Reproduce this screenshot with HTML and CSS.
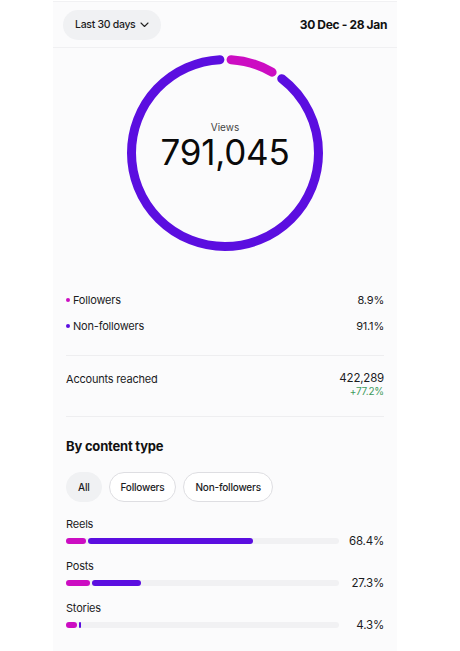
FILE: index.html
```html
<!DOCTYPE html>
<html lang="en">
<head>
<meta charset="utf-8">
<title>Views</title>
<link rel="stylesheet" href="styles.css">
</head>
<body>
<div class="panel">
  <header class="topbar">
    <button class="range-pill">Last 30 days
      <svg class="chev" width="9" height="6" viewBox="0 0 9 6"><path d="M1 1l3.5 3.5L8 1" fill="none" stroke="#222" stroke-width="1.1" stroke-linecap="round" stroke-linejoin="round"/></svg>
    </button>
    <div class="date-range">30 Dec - 28 Jan</div>
  </header>

  <section class="ring-wrap">
    <div class="ring">
      <svg class="ring-svg" width="200" height="200" viewBox="0 0 200 200">
        <g transform="rotate(-90 100 100)">
          <circle cx="100" cy="100" r="93.5" fill="none" stroke="#cc0dc2" stroke-width="9" stroke-linecap="round" stroke-dasharray="43.1 600" stroke-dashoffset="-6.2"/>
          <circle cx="100" cy="100" r="93.5" fill="none" stroke="#5b0ee0" stroke-width="9" stroke-linecap="round" stroke-dasharray="520.4 600" stroke-dashoffset="-60.9"/>
        </g>
      </svg>
      <div class="ring-center">
        <div class="ring-label">Views</div>
        <div class="ring-value">791,045</div>
      </div>
    </div>
  </section>

  <section class="content">
    <div class="legend">
      <div class="legend-row"><span class="dot dot-mag"></span><span class="legend-name">Followers</span><span class="legend-val">8.9%</span></div>
      <div class="legend-row"><span class="dot dot-pur"></span><span class="legend-name">Non-followers</span><span class="legend-val">91.1%</span></div>
    </div>

    <div class="reach">
      <span class="reach-name">Accounts reached</span>
      <div class="reach-vals">
        <div class="reach-num">422,289</div>
        <div class="reach-delta">+77.2%</div>
      </div>
    </div>

    <h2 class="section-title">By content type</h2>
    <div class="chips">
      <span class="chip chip-active">All</span>
      <span class="chip">Followers</span>
      <span class="chip">Non-followers</span>
    </div>

    <div class="type-list">
      <div class="type">
        <div class="type-name">Reels</div>
        <div class="type-row">
          <div class="track"><span class="seg seg-mag" style="width:20px"></span><span class="seg seg-pur" style="width:165px"></span></div>
          <span class="type-val">68.4%</span>
        </div>
      </div>
      <div class="type">
        <div class="type-name">Posts</div>
        <div class="type-row">
          <div class="track"><span class="seg seg-mag" style="width:24px"></span><span class="seg seg-pur" style="width:49px"></span></div>
          <span class="type-val">27.3%</span>
        </div>
      </div>
      <div class="type">
        <div class="type-name">Stories</div>
        <div class="type-row">
          <div class="track"><span class="seg seg-mag" style="width:11px"></span><span class="seg seg-pur" style="width:2px"></span></div>
          <span class="type-val">4.3%</span>
        </div>
      </div>
    </div>
  </section>
</div>
</body>
</html>
```

FILE: styles.css
```css
* { box-sizing: border-box; }
html, body { margin: 0; padding: 0; background: #ffffff; }
body {
  font-family: Inter, "Noto Sans", sans-serif;
  color: #1c1c1e;
}
.panel {
  width: 344px;
  margin-left: 53px;
  min-height: 651px;
  background: #fbfbfc;
  border-top: 1px solid #f1f1f3;
  margin-top: 1px;
}
.topbar {
  height: 46px;
  display: flex;
  align-items: center;
  justify-content: space-between;
  padding: 0 10px;
  border-bottom: 1px solid #f0f0f2;
}
.range-pill {
  height: 30px;
  border: none;
  border-radius: 15px;
  background: #f0f1f3;
  font-family: inherit;
  font-size: 10.5px;
  font-weight: 500;
  letter-spacing: -0.3px;
  white-space: nowrap;
  color: #1c1c1e;
  display: inline-flex;
  align-items: center;
  gap: 5px;
  padding: 0 12px 0 12px;
}
.chev { display: block; }
.date-range {
  font-size: 12px;
  font-weight: 700;
  letter-spacing: -0.35px;
  color: #111;
}
.ring-wrap {
  display: flex;
  justify-content: center;
  padding-top: 5px;
}
.ring {
  display: grid;
  width: 200px;
  height: 200px;
}
.ring-svg, .ring-center { grid-area: 1 / 1; }
.ring-svg { display: block; }
.ring-center {
  display: flex;
  flex-direction: column;
  align-items: center;
  padding-top: 68px;
}
.ring-label {
  font-size: 10px;
  color: #444;
  line-height: 12px;
}
.ring-value {
  font-size: 35px;
  line-height: 32px;
  margin-top: 3px;
  color: #0a0a0a;
  letter-spacing: -0.2px;
}
.content {
  padding: 0 13px;
}
.legend {
  margin-top: 34px;
  padding-bottom: 16px;
  border-bottom: 1px solid #eeeef0;
}
.legend-row {
  height: 26px;
  display: flex;
  align-items: center;
  font-size: 11px;
  letter-spacing: -0.2px;
  color: #1c1c1e;
}
.dot {
  width: 4px;
  height: 4px;
  border-radius: 50%;
  margin-right: 3px;
}
.dot-mag { background: #cc0dc2; }
.dot-pur { background: #5b0ee0; }
.legend-name { flex: 1; }
.reach {
  display: flex;
  justify-content: space-between;
  padding: 15px 0 19px;
  border-bottom: 1px solid #eeeef0;
  font-size: 11px;
  letter-spacing: -0.2px;
}
.reach-name { line-height: 16px; }
.reach-vals { text-align: right; }
.reach-num { line-height: 14px; font-size: 11.5px; }
.reach-delta {
  font-size: 10px;
  line-height: 12px;
  color: #3d9a5b;
}
.section-title {
  margin: 20px 0 0;
  font-size: 13px;
  font-weight: 700;
  letter-spacing: -0.2px;
  line-height: 18px;
  color: #111;
}
.chips {
  display: flex;
  gap: 7px;
  margin-top: 17px;
}
.chip {
  height: 30px;
  border-radius: 15px;
  border: 1px solid #dedee2;
  background: #fff;
  display: flex;
  align-items: center;
  padding: 0 11px;
  font-size: 10px;
  font-weight: 500;
  letter-spacing: -0.2px;
  color: #1c1c1e;
}
.chip-active {
  background: #f0f1f3;
  border-color: #f0f1f3;
}
.type-list {
  margin-top: 14px;
}
.type {
  margin-bottom: 10px;
}
.type-name {
  font-size: 11px;
  letter-spacing: -0.2px;
  line-height: 16px;
  color: #1c1c1e;
}
.type-row {
  margin-top: 2px;
  height: 14px;
  display: flex;
  align-items: center;
}
.track {
  width: 273px;
  height: 6px;
  border-radius: 3px;
  background: #f1f1f3;
  display: flex;
  gap: 2px;
}
.seg {
  height: 6px;
  border-radius: 3px;
}
.seg-mag { background: #cc0dc2; }
.seg-pur { background: #5b0ee0; }
.type-val {
  flex: 1;
  text-align: right;
  font-size: 11.5px;
  letter-spacing: -0.2px;
  color: #1c1c1e;
}
```
